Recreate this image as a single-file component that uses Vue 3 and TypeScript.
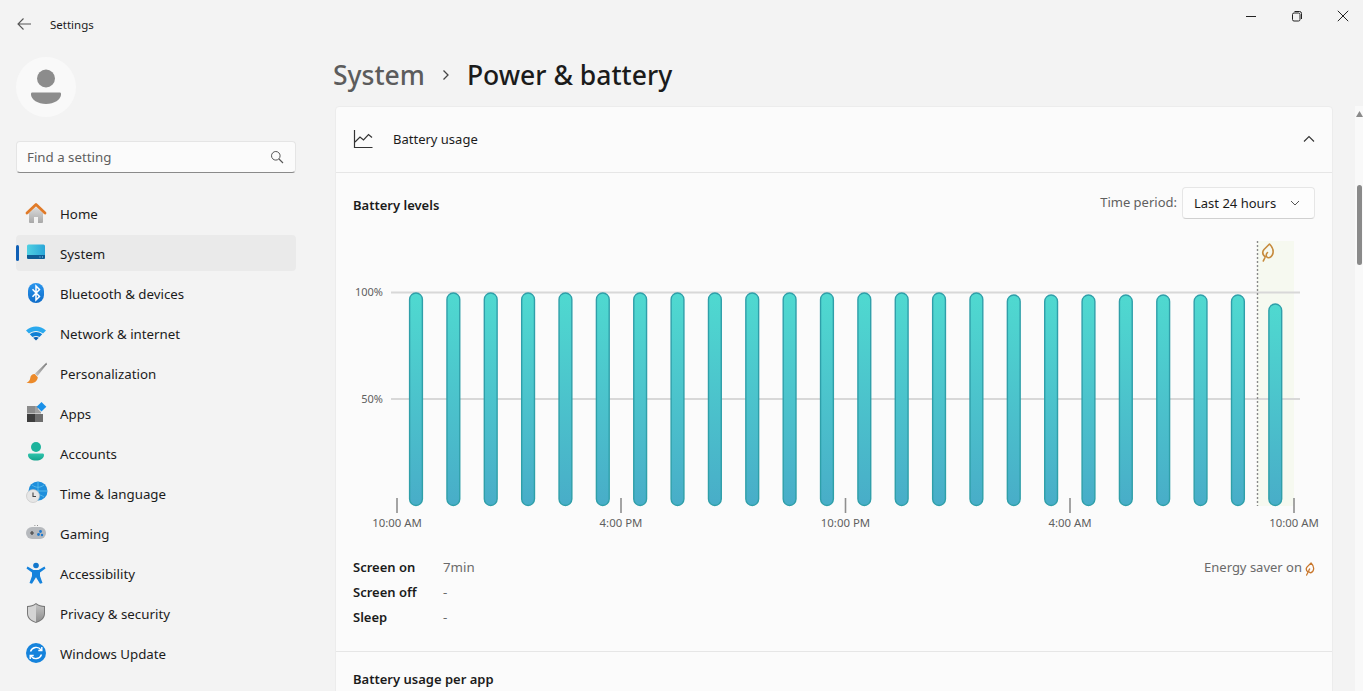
<script setup lang="ts">
const navItems = ['Home','System','Bluetooth & devices','Network & internet','Personalization','Apps','Accounts','Time & language','Gaming','Accessibility','Privacy & security','Windows Update']
const tops = [293,293,293,293,293,293,293,293,293,293,293,293,293,293,293,293,295,295,295,295,295,295,295,304]
const bars = tops.map((top, i) => ({ x: 409.6 + i * 37.36, top }))
const ticks = [
  { x: 397, label: '10:00 AM' },
  { x: 621, label: '4:00 PM' },
  { x: 845.5, label: '10:00 PM' },
  { x: 1070, label: '4:00 AM' },
  { x: 1294, label: '10:00 AM' },
]
const leaf = 'M2.300 18 C3 16 4.500 14.500 4 13.700 C1.500 11.500 1 9 3 6.500 L8.500 1 C11 3.500 12.500 7 12 10 C11.500 13 9 15 7 14.700 C5 14.300 4.500 11.500 6.500 9.500'
</script>

<template>
  <div class="app">
    <header class="titlebar">
      <svg class="back" width="16" height="16" viewBox="0 0 16 16"><path d="M15 8H2M7.500 2.500 2 8l5.500 5.500" fill="none" stroke="#555" stroke-width="1.100"/></svg>
      <span class="app-name">Settings</span>
      <div class="controls">
        <svg width="12" height="12" viewBox="0 0 12 12"><path d="M1 6.500h10" stroke="#222" stroke-width="1"/></svg>
        <svg width="12" height="12" viewBox="0 0 12 12"><rect x="1.500" y="3" width="7.500" height="8" rx="1.500" fill="none" stroke="#222"/><path d="M3.500 1.500h5a2 2 0 0 1 2 2v5.500" fill="none" stroke="#222"/></svg>
        <svg width="12" height="12" viewBox="0 0 12 12"><path d="M.8.800l10.400 10.400M11.200.800.800 11.200" stroke="#222" stroke-width="1"/></svg>
      </div>
    </header>
    <div class="body">
      <aside class="sidebar">
        <div class="avatar">
          <svg width="30" height="36" viewBox="0 0 30 36"><circle cx="15" cy="9.500" r="9" fill="#8c8c8c"/><path d="M1 23.500h28c1 0 1 1 1 2 0 5-7 9.500-15 9.500S0 30.500 0 25.500c0-1 0-2 1-2z" fill="#8c8c8c"/></svg>
        </div>
        <div class="search">
          <span>Find a setting</span>
          <svg width="14" height="14" viewBox="0 0 14 14"><circle cx="5.800" cy="5.800" r="4.300" fill="none" stroke="#555"/><path d="M9 9l4 4" stroke="#555" stroke-width="1.100"/></svg>
        </div>
        <nav class="nav">
          <div v-for="(item, i) in navItems" :key="item" class="nav-item" :class="{ active: i === 1 }">
            <span v-if="i === 1" class="pill"></span>
            <svg class="nav-icon" width="24" height="24" viewBox="0 0 24 24">
              <defs>
                <linearGradient id="homeBody" x1="0" y1="0" x2="0" y2="1"><stop offset="0" stop-color="#dcdcdc"/><stop offset="1" stop-color="#a8a8a8"/></linearGradient>
                <linearGradient id="sysTop" x1="0" y1="0" x2="1" y2="0"><stop offset="0" stop-color="#4fd0e2"/><stop offset="1" stop-color="#2aa6d8"/></linearGradient>
                <linearGradient id="blueRound" x1="0" y1="0" x2="0" y2="1"><stop offset="0" stop-color="#2a96ee"/><stop offset="1" stop-color="#0f6cc8"/></linearGradient>
                <linearGradient id="brushH" x1="1" y1="0" x2="0" y2="1"><stop offset="0" stop-color="#777"/><stop offset="1" stop-color="#c8c8c8"/></linearGradient>
                <linearGradient id="acct" x1="0" y1="0" x2="0" y2="1"><stop offset="0" stop-color="#2fc4ac"/><stop offset="1" stop-color="#14a48e"/></linearGradient>
                <linearGradient id="shield" x1="0" y1="0" x2="0" y2="1"><stop offset="0" stop-color="#c4c4c4"/><stop offset="1" stop-color="#8e8e8e"/></linearGradient>
              </defs>
              <template v-if="i === 0">
                <path d="M5 12v9a1 1 0 0 0 1 1h4v-6h4v6h4a1 1 0 0 0 1-1v-9l-7-6z" fill="url(#homeBody)"/>
                <path d="M3 12 12 3.500l9 8.500" fill="none" stroke="#e07a28" stroke-width="2.800" stroke-linecap="round" stroke-linejoin="round"/>
              </template>
              <template v-else-if="i === 1">
                <rect x="3" y="3.500" width="18" height="14.500" rx="1.500" fill="url(#sysTop)"/>
                <path d="M3 14h18v2.500A1.500 1.500 0 0 1 19.500 18h-15A1.500 1.500 0 0 1 3 16.500z" fill="#0f5c94"/>
                <path d="M15.500 16h1M18 16h1" stroke="#9ad4f0"/>
              </template>
              <template v-else-if="i === 2">
                <rect x="4" y="2" width="16" height="20" rx="8" fill="url(#blueRound)"/>
                <path d="M8.500 8.300l7 7.200-3.500 3.500V5l3.500 3.500-7 7.200" fill="none" stroke="#fff" stroke-width="1.500"/>
              </template>
              <template v-else-if="i === 3">
                <path d="M2 9.500C8 4 16 4 22 9.500L19 12.500C14.500 9 9.500 9 5 12.500z" fill="#2aa9ee"/>
                <path d="M5.800 13.200C9.800 10.200 14.200 10.200 18.200 13.200L15.500 16C13.300 14.500 10.700 14.500 8.500 16z" fill="#0f7fd4"/>
                <path d="M9.200 16.700c1.800-1.100 3.800-1.100 5.600 0L12 19.500z" fill="#0a5fb0"/>
              </template>
              <template v-else-if="i === 4">
                <path d="M22.500 1.500 11 12.500l2.500 2.500L22.800 3.200z" fill="url(#brushH)"/>
                <path d="M10.800 13c-3 0-4.300 2-4.600 4.200C6 19.500 4.500 20.800 2.500 21.800c4.500 1.200 10.800.5 11.300-5.500z" fill="#ec8a2a"/>
              </template>
              <template v-else-if="i === 5">
                <path d="M3 5h8v7.500H3z" fill="#8b8b8b"/>
                <path d="M11 5h3v3l3 3v1.500h-6z" fill="#a0a0a0"/>
                <path d="M11 13h8v8h-8z" fill="#6e6e6e"/>
                <path d="M3 13h8v8H3z" fill="#3d3d3d"/>
                <path d="M17.500 1l4.800 4.800-4.800 4.800-4.800-4.800z" fill="#1a90e8"/>
              </template>
              <template v-else-if="i === 6">
                <circle cx="12" cy="6" r="5" fill="#1cb39c"/>
                <path d="M5 12.500h14a1.500 1.500 0 0 1 1 1.500c0 3.500-3.500 5.500-8 5.500s-8-2-8-5.500a1.500 1.500 0 0 1 1-1.500z" fill="url(#acct)"/>
              </template>
              <template v-else-if="i === 7">
                <circle cx="14" cy="10" r="9.500" fill="#1f8fdc"/>
                <path d="M14 .5v19M5 10h18M8 4c4 3 8 3 12 0M8 16c4-3 8-3 12 0" fill="none" stroke="#62c1ee" stroke-width=".8"/>
                <circle cx="9" cy="15" r="6.500" fill="#e6e6e6" stroke="#bdbdbd" stroke-width=".6"/>
                <path d="M9 11.500V15.500h3" fill="none" stroke="#444" stroke-width="1.100"/>
              </template>
              <template v-else-if="i === 8">
                <rect x="2" y="6" width="20" height="12" rx="6" fill="#b6b9bd"/>
                <path d="M6 12h4M8 10v4" stroke="#444" stroke-width="1.200"/>
                <circle cx="16.500" cy="10.500" r="1.400" fill="#1f78cc"/><circle cx="14.500" cy="13.500" r="1.400" fill="#1f78cc"/><circle cx="18" cy="14" r="1.200" fill="#1f78cc"/>
                <path d="M10.500 4.500h.8M13 4.500h.8" stroke="#777"/>
              </template>
              <template v-else-if="i === 9">
                <circle cx="12" cy="4.500" r="2.800" fill="#1277cc"/>
                <path d="M3.500 5.500 9.500 9h5l6-3.500 1 2-5.500 4v3.500l2.500 7-2.500.8-4-6.500-4 6.500-2.500-.8 2.500-7V11.500L2.500 7.500z" fill="#1482dc"/>
              </template>
              <template v-else-if="i === 10">
                <path d="M12 2c3 2.200 5.500 3 9 3v7.500c0 4.800-3.800 8-9 9.500-5.200-1.500-9-4.700-9-9.500V5c3.500 0 6-.8 9-3z" fill="#777"/>
                <path d="M12 3.200C14.700 5 17 5.800 20 6v6.500c0 4.100-3.300 7-8 8.400z" fill="url(#shield)"/>
                <path d="M12 3.200C9.300 5 7 5.800 4 6v6.500c0 4.100 3.300 7 8 8.400z" fill="#d4d4d4"/>
              </template>
              <template v-else>
                <circle cx="12" cy="12" r="10" fill="#1583dc"/>
                <path d="M6.500 10.500a6 6 0 0 1 10.500-1.700M17.500 13.500A6 6 0 0 1 7 15.200" fill="none" stroke="#fff" stroke-width="1.400"/>
                <path d="M17.800 6v3.500h-3.500M6.200 18v-3.500h3.500" fill="none" stroke="#fff" stroke-width="1.400"/>
              </template>
            </svg>
            <span class="nav-label">{{ item }}</span>
          </div>
        </nav>
      </aside>
      <main class="main">
        <h1 class="heading"><span class="crumb">System</span><svg class="crumb-sep" width="12" height="12" viewBox="0 0 12 12"><path d="M3.500 1.500 8 6l-4.500 4.500" fill="none" stroke="#444" stroke-width="1.300"/></svg><span>Power &amp; battery</span></h1>
        <section class="card">
          <div class="card-head">
            <svg width="20" height="20" viewBox="0 0 20 20"><path d="M1.500 1v17.500h18" fill="none" stroke="#333" stroke-width="1.200"/><path d="M2 13l5-5 3.500 3 5-5.500 3.500 3" fill="none" stroke="#333" stroke-width="1.200"/></svg>
            <span class="card-title">Battery usage</span>
            <svg class="chev-up" width="12" height="12" viewBox="0 0 12 12"><path d="M1 8.500 6 3.500l5 5" fill="none" stroke="#333" stroke-width="1.100"/></svg>
          </div>
          <div class="levels">
            <div class="levels-head">
              <span class="strong levels-title">Battery levels</span>
              <div class="period">
                <span class="period-label">Time period:</span>
                <div class="dropdown">
                  <span>Last 24 hours</span>
                  <svg width="10" height="10" viewBox="0 0 10 10"><path d="M1 3l4 4 4-4" fill="none" stroke="#555" stroke-width="1"/></svg>
                </div>
              </div>
            </div>
            <svg class="chart" width="998" height="306" viewBox="335 232 998 306">
              <defs>
                <linearGradient id="barFill" x1="0" y1="0" x2="0" y2="1"><stop offset="0" stop-color="#4fd9d0"/><stop offset="1" stop-color="#48adc8"/></linearGradient>
              </defs>
              <rect x="1257" y="241" width="37" height="265" fill="#f6f9f0"/>
              <path d="M391 292.500H1300M391 399H1300" stroke="#d8d8d8" stroke-width="2"/>
              <text class="axis" x="383" y="296" text-anchor="end">100%</text>
              <text class="axis" x="383" y="403" text-anchor="end">50%</text>
              <rect v-for="b in bars" :key="b.x" :x="b.x" :y="b.top" width="12.800" :height="505.500 - b.top" rx="6.400" fill="url(#barFill)" stroke="#2f9fa9" stroke-width="1.400"/>
              <path d="M1257.500 241V506" stroke="#8a8a8a" stroke-width="1.400" stroke-dasharray="2 2"/>
              <g v-for="t in ticks" :key="t.x">
                <path :d="`M${t.x} 498V513`" stroke="#8f8f8f" stroke-width="1.600"/>
                <text class="axis tick" :x="t.x" y="527" text-anchor="middle">{{ t.label }}</text>
              </g>
              <g transform="translate(1261 243)"><path :d="leaf" fill="none" stroke="#c68a3c" stroke-width="1.600" stroke-linecap="round" stroke-linejoin="round"/></g>
            </svg>
            <div class="stats">
              <dl class="stat-list">
                <div class="stat"><dt>Screen on</dt><dd>7min</dd></div>
                <div class="stat"><dt>Screen off</dt><dd>-</dd></div>
                <div class="stat"><dt>Sleep</dt><dd>-</dd></div>
              </dl>
              <div class="saver">
                <span>Energy saver on</span>
                <svg class="saver-leaf" width="10" height="14" viewBox="0 0 14 19"><path :d="leaf" fill="none" stroke="#c9772c" stroke-width="1.800" stroke-linecap="round" stroke-linejoin="round"/></svg>
              </div>
            </div>
          </div>
          <div class="per-app"><span class="strong">Battery usage per app</span></div>
        </section>
      </main>
      <div class="scrollbar">
        <svg width="7" height="6" viewBox="0 0 7 6"><path d="M3.500 0 7 6H0z" fill="#8a8a8a"/></svg>
        <div class="thumb"></div>
      </div>
    </div>
  </div>
</template>

<style>
html, body { margin: 0; padding: 0; overflow: hidden; }
</style>

<style scoped>
.app {
  width: 1363px;
  height: 691px;
  overflow: hidden;
  display: flex;
  flex-direction: column;
  background: #f3f3f3;
  color: #1b1b1b;
  font-family: "Noto Sans", "Open Sans", sans-serif;
  font-size: 13.300px;
}
.titlebar {
  height: 48px;
  flex: none;
  display: flex;
  align-items: center;
  padding-left: 16px;
}
.back { margin-right: 18px; }
.app-name { font-size: 11.500px; }
.controls {
  margin-left: auto;
  align-self: flex-start;
  display: flex;
  align-items: center;
  gap: 34px;
  padding: 10px 14px 0 0;
}
.body { flex: 1; display: flex; min-height: 0; }
.sidebar { width: 333px; flex: none; padding: 9px 37px 0 16px; box-sizing: border-box; }
.avatar {
  width: 60px;
  height: 60px;
  border-radius: 50%;
  background: #f9f9f9;
  display: flex;
  align-items: center;
  justify-content: center;
}
.search {
  margin-top: 24px;
  height: 32px;
  box-sizing: border-box;
  background: #fbfbfb;
  border: 1px solid #e5e5e5;
  border-bottom: 1px solid #8a8a8a;
  border-radius: 4px;
  display: flex;
  align-items: center;
  justify-content: space-between;
  padding: 0 11px 0 10px;
  color: #5f5f5f;
}
.nav { margin-top: 22px; display: flex; flex-direction: column; gap: 4px; }
.nav-item {
  position: relative;
  height: 36px;
  display: flex;
  align-items: center;
  gap: 12px;
  padding-left: 8px;
  border-radius: 4px;
}
.nav-label { padding-top: 2px; }
.nav-item.active { background: #eaeaea; }
.pill {
  position: absolute;
  left: 0;
  top: 10px;
  width: 3px;
  height: 16px;
  border-radius: 2px;
  background: #0f5fb5;
}
.main { flex: 1; min-width: 0; display: flex; flex-direction: column; overflow: hidden; }
.heading {
  flex: none;
  margin: 0;
  height: 58px;
  display: flex;
  align-items: center;
  font-size: 26.500px;
  font-weight: 500;
  padding-bottom: 4px;
  box-sizing: border-box;
}
.crumb { color: #5c5c5c; }
.crumb-sep { margin: 0 15px; }
.card {
  width: 998px;
  flex: none;
  margin-left: 2px;
  background: #fbfbfb;
  border: 1px solid #ececec;
  box-sizing: border-box;
  border-radius: 4px 4px 0 0;
}
.card-head {
  height: 66px;
  box-sizing: border-box;
  display: flex;
  align-items: center;
  padding: 0 17px 2px 17px;
  border-bottom: 1px solid #e6e6e6;
  font-size: 13px;
}
.card-title { margin-left: 20px; }
.chev-up { margin-left: auto; }
.levels { border-bottom: 1px solid #e6e6e6; height: 479px; box-sizing: border-box; }
.levels-head {
  display: flex;
  align-items: center;
  justify-content: space-between;
  height: 59px;
  padding: 0 17px 0 17px;
}
.levels-title { padding-top: 4px; }
.strong { font-weight: 600; font-size: 13px; }
.period { display: flex; align-items: center; gap: 5px; }
.period-label { color: #5f5f5f; font-size: 13px; padding-bottom: 2px; }
.dropdown {
  width: 133px;
  height: 32px;
  box-sizing: border-box;
  background: #fdfdfd;
  border: 1px solid #e6e6e6;
  border-bottom-color: #d0d0d0;
  border-radius: 4px;
  display: flex;
  align-items: center;
  justify-content: space-between;
  padding: 0 14px 0 11px;
  font-size: 13px;
}
.chart { display: block; margin-left: -1px; }
.axis { font-size: 11px; fill: #5f5f5f; }
.tick { font-size: 11.400px; }
.stats { display: flex; justify-content: space-between; padding: 16px 17px 0 17px; }
.stat-list { margin: 0; display: flex; flex-direction: column; }
.stat { display: flex; height: 25px; align-items: center; }
.stat dt { width: 90px; font-weight: 600; font-size: 13px; }
.stat dd { margin: 0; color: #6a6a6a; }
.saver { display: flex; align-items: center; gap: 3px; height: 25px; color: #6a6a6a; font-size: 13px; }
.saver-leaf { margin-top: 5px; }
.per-app { padding: 18px 17px; }
.scrollbar {
  position: absolute;
  left: 1355px;
  top: 106px;
  bottom: 0;
  width: 8px;
  background: #f9f9f9;
  padding: 5px 0 0 1px;
  box-sizing: border-box;
}
.scrollbar svg { display: block; }
.thumb { margin: 68px 0 0 1px; width: 5px; height: 80px; border-radius: 3px; background: #8a8a8a; }
</style>
